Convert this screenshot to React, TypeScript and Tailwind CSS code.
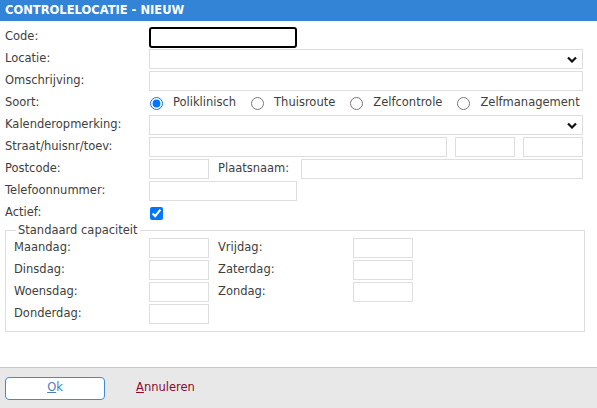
import type { ReactNode } from "react";

const font = { fontFamily: '"DejaVu Sans", Verdana, sans-serif' };

function Field({ className = "" }: { className?: string }) {
  return <input type="text" className={`h-[20px] border border-[#dedede] bg-white outline-none ${className}`} />;
}

function Select() {
  return (
    <div className="flex h-[20px] flex-1 items-center justify-end border border-[#dedede] bg-white pr-[5px]">
      <svg width="10" height="7" viewBox="0 0 10 7">
        <path d="M1 1.5 L5 5.5 L9 1.5" stroke="#111" strokeWidth="2.2" fill="none" />
      </svg>
    </div>
  );
}

function Row({ label, children }: { label: string; children: ReactNode }) {
  return (
    <div className="flex h-[22px] items-center">
      <div className="w-[144px] shrink-0">{label}</div>
      <div className="flex flex-1 items-center">{children}</div>
    </div>
  );
}

function Radio({ label, checked }: { label: string; checked?: boolean }) {
  return (
    <label className="flex items-center">
      <input type="radio" name="soort" defaultChecked={checked} className="m-0 ml-[1px] h-[13px] w-[13px]" />
      <span className="ml-[10px]">{label}</span>
    </label>
  );
}

function DayRow({ left, right }: { left: string; right?: string }) {
  return (
    <div className="flex h-[22px] items-center">
      <div className="w-[135px] shrink-0">{left}</div>
      <Field className="w-[60px]" />
      {right && (
        <>
          <div className="ml-[9px] w-[135px]">{right}</div>
          <Field className="w-[60px]" />
        </>
      )}
    </div>
  );
}

export default function App() {
  return (
    <div className="flex h-[408px] w-[597px] flex-col bg-white text-[11.5px] text-[#404040]" style={font}>
      <div className="flex h-[21px] items-center bg-[#3384d6] px-[5px] text-[11.5px] font-bold text-white">
        CONTROLELOCATIE - NIEUW
      </div>
      <div className="flex-1 px-[5px] pt-[5px] pr-[14px]">
        <Row label="Code:">
          <input type="text" className="h-[21px] w-[148px] rounded-[3px] border-2 border-black outline-none" />
        </Row>
        <Row label="Locatie:">
          <Select />
        </Row>
        <Row label="Omschrijving:">
          <Field className="flex-1" />
        </Row>
        <Row label="Soort:">
          <div className="flex items-center gap-[14px]">
            <Radio label="Poliklinisch" checked />
            <Radio label="Thuisroute" />
            <Radio label="Zelfcontrole" />
            <Radio label="Zelfmanagement" />
          </div>
        </Row>
        <Row label="Kalenderopmerking:">
          <Select />
        </Row>
        <Row label="Straat/huisnr/toev:">
          <Field className="flex-1" />
          <Field className="ml-[8px] w-[60px]" />
          <Field className="ml-[8px] w-[60px]" />
        </Row>
        <Row label="Postcode:">
          <Field className="w-[60px]" />
          <span className="ml-[9px] w-[83px]">Plaatsnaam:</span>
          <Field className="flex-1" />
        </Row>
        <Row label="Telefoonnummer:">
          <Field className="w-[148px]" />
        </Row>
        <Row label="Actief:">
          <input type="checkbox" defaultChecked className="m-0 ml-[1px] h-[13px] w-[13px]" />
        </Row>
        <fieldset className="mt-[-1px] mr-[-2px] border border-[#dedede] px-[8px] pb-[6px]">
          <legend className="ml-[2px] px-[2px] leading-[14px]">Standaard capaciteit</legend>
          <DayRow left="Maandag:" right="Vrijdag:" />
          <DayRow left="Dinsdag:" right="Zaterdag:" />
          <DayRow left="Woensdag:" right="Zondag:" />
          <DayRow left="Donderdag:" />
        </fieldset>
      </div>
      <div className="flex h-[41px] items-center border-t border-[#c8c8c8] bg-[#e8e8e8] px-[5px]">
        <button className="h-[23px] w-[100px] rounded-[4px] border border-[#3d8ad8] bg-white text-[#4a7fb8]">
          <span className="underline">O</span>k
        </button>
        <span className="ml-[31px] text-[#8a0a32]">
          <span className="underline">A</span>nnuleren
        </span>
      </div>
    </div>
  );
}
